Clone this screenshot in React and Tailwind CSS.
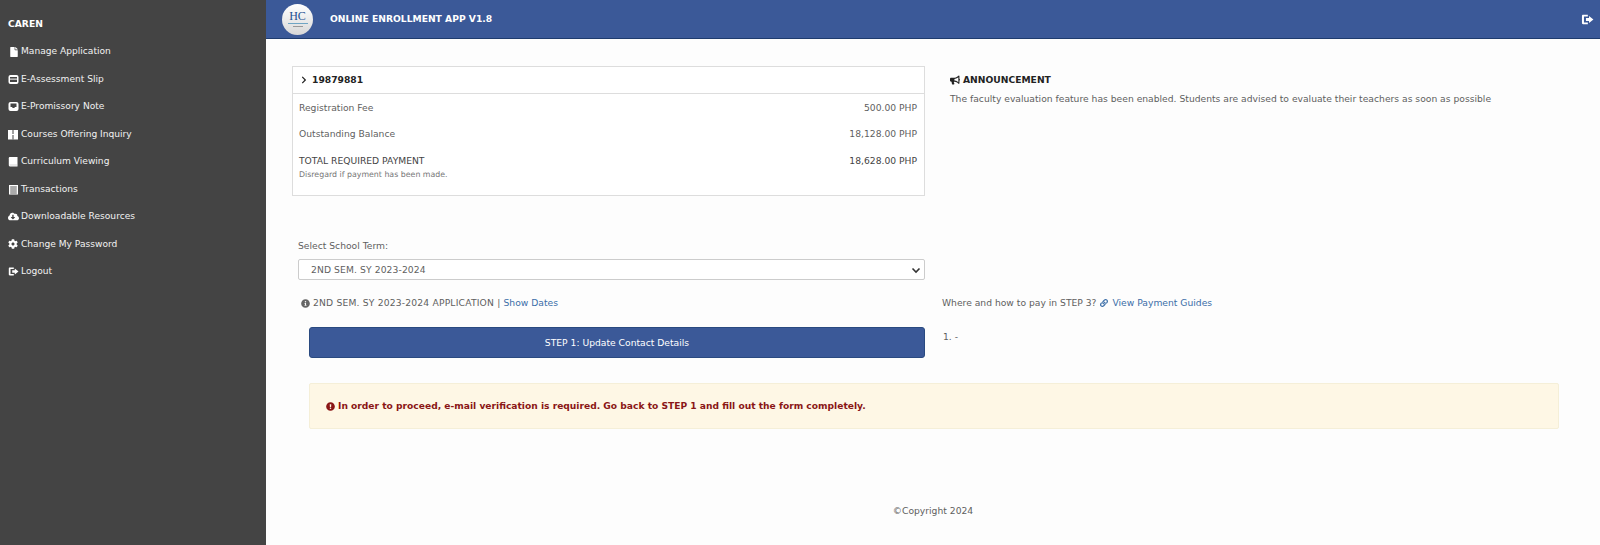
import React from "react";
import { FaFile, FaCloudDownloadAlt, FaCog, FaChevronRight, FaBullhorn, FaInfoCircle, FaLink, FaExclamationCircle } from "react-icons/fa";

const font = { fontFamily: '"DejaVu Sans", Verdana, sans-serif' };

const Slip = () => (
  <svg width="11" height="11" viewBox="0 0 11 11"><rect x="0.5" y="1" width="10" height="9" rx="2" fill="#fff" /><rect x="2" y="3" width="7" height="1.6" fill="#444" /><rect x="2" y="5.6" width="7" height="2.4" fill="#444" /></svg>
);
const Inbox = () => (
  <svg width="11" height="11" viewBox="0 0 11 11"><rect x="0.5" y="1" width="10" height="9" rx="2" fill="#fff" /><path d="M2.5 2.5h6v3.5H7l-.7 1H4.7L4 6H2.5z" fill="#444" /></svg>
);
const Columns = () => (
  <svg width="11" height="11" viewBox="0 0 11 11"><rect x="0" y="1" width="10" height="9.5" fill="#fff" /><rect x="4.5" y="1" width="1" height="9.5" fill="#444" /><rect x="3.6" y="5" width="2.8" height="1" fill="#fff" /></svg>
);
const Book = () => (
  <svg width="11" height="11" viewBox="0 0 11 11"><path d="M2 1h7.5v9.5H2C1 10.500 .8 9.700 .8 9V2.200C.8 1.500 1.200 1 2 1z" fill="#fff" /><path d="M1.500 9h8" stroke="#bbb" strokeWidth=".6" /></svg>
);
const List = () => (
  <svg width="11" height="11" viewBox="0 0 11 11"><rect x="1" y="1" width="9" height="9.500" fill="#fff" /><path d="M2.200 3h6.600M2.200 5h6.600M2.200 7h6.600M2.200 9h6.600" stroke="#444" strokeWidth="0.9" /></svg>
);
const SignOut = ({ s = 11, className = "" }) => (
  <svg width={s} height={s} viewBox="0 0 11 11" fill="#fff" className={className}><path d="M1.800 1.500h4v1.500H2.500v5h3.300v1.500h-4C1 9.500.8 9 .8 8.300V2.700C.8 2 1 1.500 1.800 1.500z" /><path d="M4.200 4.300h2.600V2.500l3.700 3-3.700 3V6.700H4.200z" /></svg>
);
const menu = [
  [<FaFile size={10} className="ml-[1px] text-white" />, "Manage Application"],
  [<Slip />, "E-Assessment Slip"],
  [<Inbox />, "E-Promissory Note"],
  [<Columns />, "Courses Offering Inquiry"],
  [<Book />, "Curriculum Viewing"],
  [<List />, "Transactions"],
  [<FaCloudDownloadAlt size={11} className="text-white" />, "Downloadable Resources"],
  [<FaCog size={10} className="text-white" />, "Change My Password"],
  [<SignOut />, "Logout"],
];

function Row({ label, value, className = "" }) {
  return (
    <div className={`flex justify-between text-[9.2px] leading-[14px] text-[#5f5f5f] ${className}`}>
      <span>{label}</span>
      <span>{value}</span>
    </div>
  );
}

export default function App() {
  return (
    <div style={font} className="flex h-[545px] w-[1600px] overflow-hidden bg-[#fdfdfd] text-[9.2px] text-[#5f5f5f]">
      <aside className="h-full w-[266px] shrink-0 bg-[#444444] pl-2 pt-[16px] text-white">
        <div className="h-[15px] text-[9.2px] font-bold leading-[15px]">CAREN</div>
        <ul className="mt-[13px] flex flex-col gap-[12.5px]">
          {menu.map(([icon, label]) => (
            <li key={label} className="flex h-[15px] items-center text-[9.1px] leading-[15px] text-[#f2f2f2]">
              <span className="flex w-[13px] shrink-0 justify-start">{icon}</span>
              <span>{label}</span>
            </li>
          ))}
        </ul>
      </aside>
      <main className="flex min-w-0 flex-1 flex-col">
        <header className="flex h-[39px] shrink-0 items-center border-b border-[#1f3c6e] bg-[#3b5998] pl-[16px] pr-[6px] text-white">
          <div className="flex h-[31px] w-[31px] flex-col items-center justify-center overflow-hidden rounded-full bg-gradient-to-b from-white to-[#d8d8d8]">
            <span className="text-[12px] leading-[10px] text-[#1d4f91]" style={{ fontFamily: '"Liberation Serif", serif' }}>HC</span>
            <span className="mt-[2px] h-[1px] w-[20px] bg-[#6fa5c4]"></span>
            <span className="mt-[2px] h-[1px] w-[10px] bg-[#999]"></span>
          </div>
          <div className="ml-[17px] text-[9.2px] font-bold">ONLINE ENROLLMENT APP V1.8</div>
          <SignOut s={13} className="ml-auto" />
        </header>

        <div className="flex gap-[25px] pl-[26px] pt-[27px]">
          <section className="h-[130px] w-[633px] shrink-0 border border-[#dddddd] bg-white">
            <div className="flex h-[27px] items-center gap-[4px] border-b border-[#dddddd] pl-[7px] text-[9.2px] font-bold text-[#222]">
              <FaChevronRight size={8} />
              <span>19879881</span>
            </div>
            <div className="pl-[6px] pr-[7px] pt-[7px]">
              <Row label="Registration Fee" value="500.00 PHP" />
              <Row label="Outstanding Balance" value="18,128.00 PHP" className="mt-[11.5px]" />
              <Row label="TOTAL REQUIRED PAYMENT" value="18,628.00 PHP" className="mt-[13.5px] !text-[#444]" />
              <div className="text-[7.85px] leading-[13px] text-[#777]">Disregard if payment has been made.</div>
            </div>
          </section>
          <section className="pt-[7px]">
            <div className="flex items-center gap-[3px] text-[9.2px] font-bold leading-[14px] text-[#222]">
              <FaBullhorn size={10} />
              <span>ANNOUNCEMENT</span>
            </div>
            <p className="mt-[5px] text-[9.2px] leading-[14px] text-[#5f5f5f]">The faculty evaluation feature has been enabled. Students are advised to evaluate their teachers as soon as possible</p>
          </section>
        </div>

        <div className="mt-[43px] pl-[32px]">
          <div className="w-[627px]">
            <div className="text-[9.2px] leading-[14px]">Select School Term:</div>
            <div className="mt-[6px] flex h-[21px] items-center justify-between rounded-[2px] border border-[#cccccc] bg-white pl-[12px] pr-[3px] text-[9.2px] tracking-[0.1px]">
              <span>2ND SEM. SY 2023-2024</span>
              <svg width="10" height="10" viewBox="0 0 10 10" fill="none" stroke="#333" strokeWidth="1.6"><path d="M1.500 3.500 5 7l3.500-3.500" /></svg>
            </div>
          </div>
        </div>

        <div className="mt-[16px] flex pl-[35px] text-[9.2px] leading-[14px]">
          <div className="flex w-[623px] shrink-0 items-center gap-[3px]">
            <FaInfoCircle size={9} className="text-[#666]" />
            <span><span className="tracking-[0.18px]">2ND SEM. SY 2023-2024 APPLICATION | </span><span className="text-[#3b6ea8]">Show Dates</span></span>
          </div>
          <div className="ml-[18px] flex items-center gap-[4px]">
            <span>Where and how to pay in STEP 3?</span>
            <FaLink size={8} className="text-[#3b6ea8]" />
            <span className="text-[#3b6ea8]">View Payment Guides</span>
          </div>
        </div>

        <div className="mt-[17px] flex pl-[43px]">
          <button className="flex h-[31px] w-[616px] shrink-0 items-center justify-center rounded-[3px] border border-[#2a4a80] bg-[#3b5998] text-[9.2px] text-white" style={font}>STEP 1: Update Contact Details</button>
          <div className="ml-[18px] pt-[3px] text-[9.2px] leading-[14px]">1. -</div>
        </div>

        <div className="ml-[43px] mt-[25px] flex h-[46px] w-[1250px] items-center gap-[3px] rounded-[2px] border border-[#f5efd8] bg-[#fef7e5] pl-[16px] pt-[1px] text-[9.15px] font-bold text-[#8a1616]">
          <FaExclamationCircle size={9} />
          <span>In order to proceed, e-mail verification is required. Go back to STEP 1 and fill out the form completely.</span>
        </div>

        <footer className="mt-[75px] text-center text-[9.2px] leading-[14px]">©Copyright 2024</footer>
      </main>
    </div>
  );
}
